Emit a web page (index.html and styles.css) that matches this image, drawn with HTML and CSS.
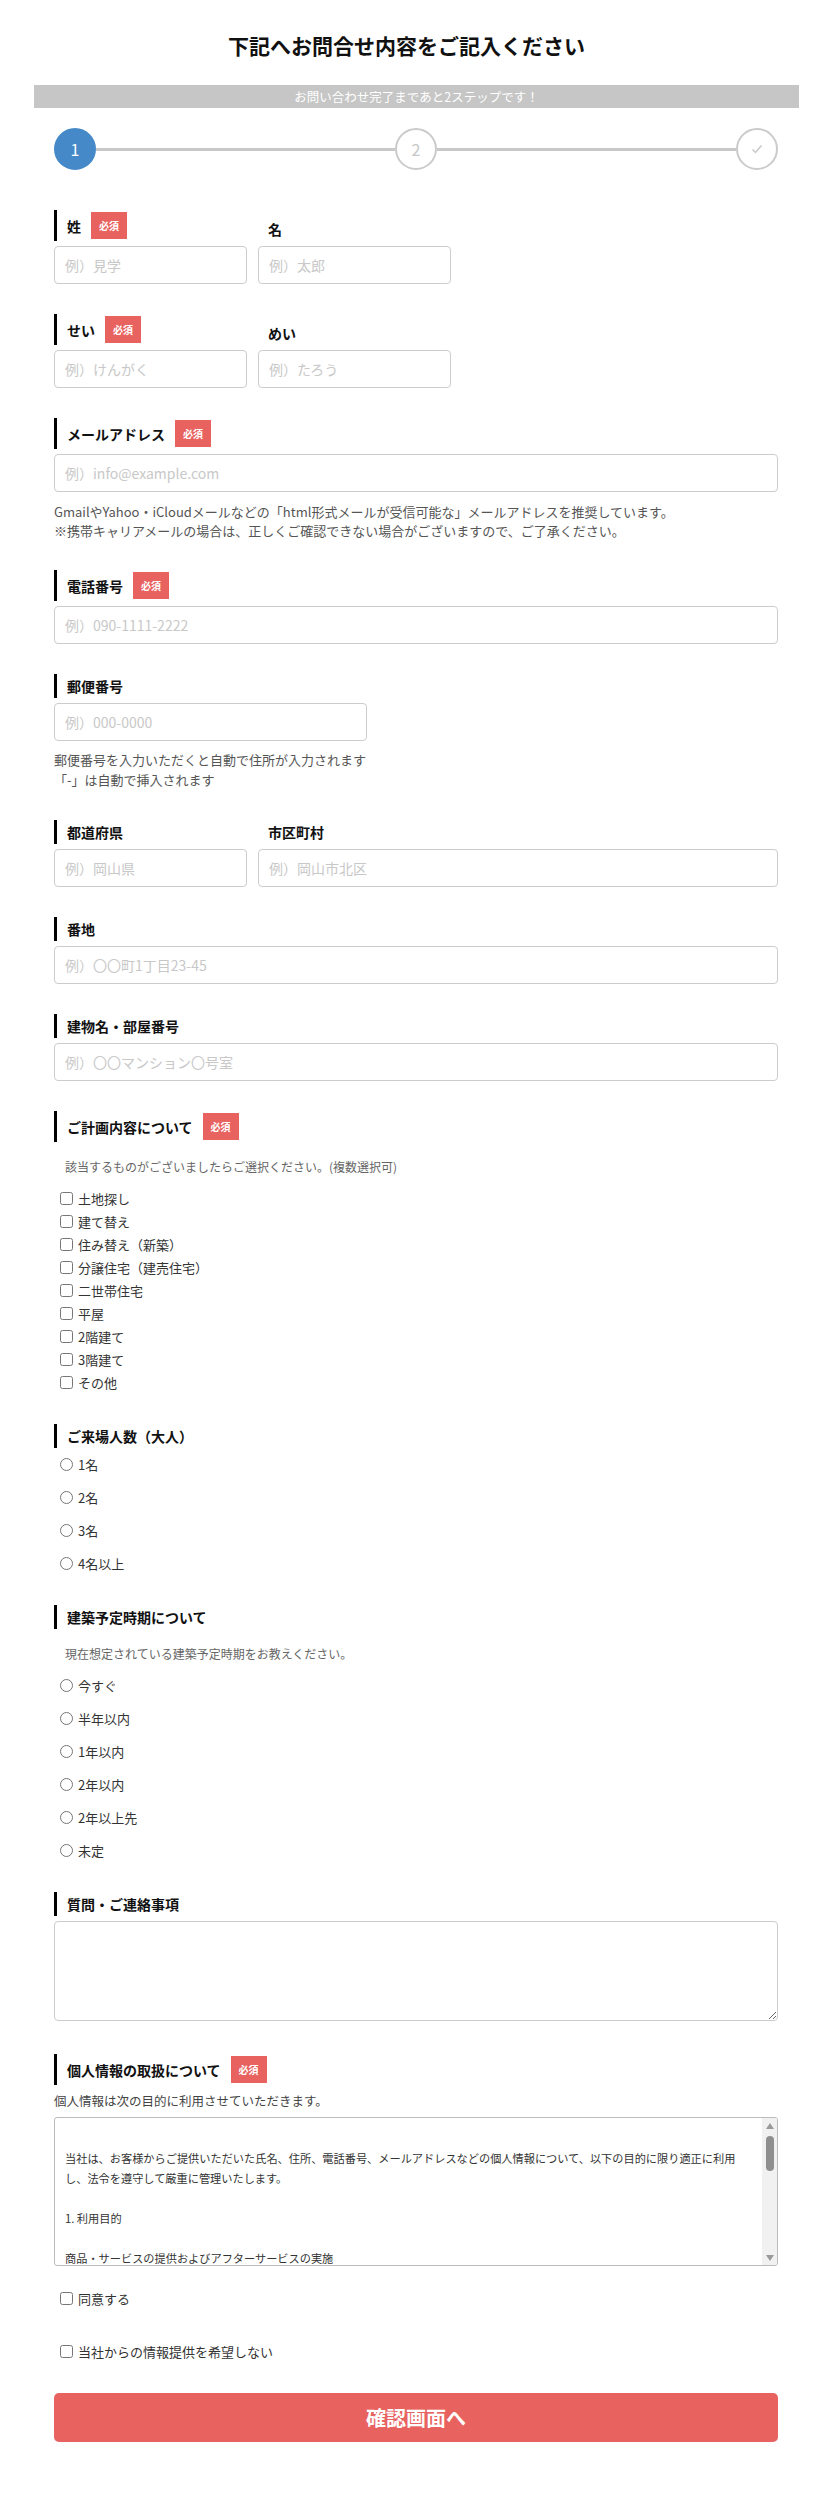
FILE: index.html
```html
<!DOCTYPE html>
<html lang="ja">
<head>
<meta charset="utf-8">
<title>お問合せ</title>
<link rel="stylesheet" href="styles.css">
</head>
<body>
<div class="page">
  <h1 class="title">下記へお問合せ内容をご記入ください</h1>
  <div class="notice">お問い合わせ完了まであと2ステップです！</div>
  <form class="form">
    <div class="steps">
      <span class="step step-active">1</span>
      <span class="step-line"></span>
      <span class="step">2</span>
      <span class="step-line"></span>
      <span class="step"><svg width="14" height="14" viewBox="0 0 14 14"><path d="M2.5 7.5 L5.5 10.5 L11.5 3.5" fill="none" stroke="#c8c8c8" stroke-width="1.5"/></svg></span>
    </div>

    <div class="field pair">
      <div class="col"><div class="label">姓<span class="req">必須</span></div><input class="input" placeholder="例）見学"></div>
      <div class="col"><div class="label sub">名</div><input class="input" placeholder="例）太郎"></div>
    </div>

    <div class="field pair">
      <div class="col"><div class="label">せい<span class="req">必須</span></div><input class="input" placeholder="例）けんがく"></div>
      <div class="col"><div class="label sub">めい</div><input class="input" placeholder="例）たろう"></div>
    </div>

    <div class="field">
      <div class="label">メールアドレス<span class="req">必須</span></div>
      <input class="input" placeholder="例）info@example.com">
      <p class="help">GmailやYahoo・iCloudメールなどの「html形式メールが受信可能な」メールアドレスを推奨しています。<br>※携帯キャリアメールの場合は、正しくご確認できない場合がございますので、ご了承ください。</p>
    </div>

    <div class="field">
      <div class="label">電話番号<span class="req">必須</span></div>
      <input class="input" placeholder="例）090-1111-2222">
    </div>

    <div class="field">
      <div class="label">郵便番号</div>
      <input class="input input-zip" placeholder="例）000-0000">
      <p class="help help-zip">郵便番号を入力いただくと自動で住所が入力されます<br>「-」は自動で挿入されます</p>
    </div>

    <div class="field pair pair-wide">
      <div class="col"><div class="label">都道府県</div><input class="input" placeholder="例）岡山県"></div>
      <div class="col"><div class="label sub">市区町村</div><input class="input" placeholder="例）岡山市北区"></div>
    </div>

    <div class="field">
      <div class="label">番地</div>
      <input class="input" placeholder="例）〇〇町1丁目23-45">
    </div>

    <div class="field">
      <div class="label">建物名・部屋番号</div>
      <input class="input" placeholder="例）〇〇マンション〇号室">
    </div>

    <div class="field">
      <div class="label">ご計画内容について<span class="req">必須</span></div>
      <p class="desc">該当するものがございましたらご選択ください。(複数選択可)</p>
      <div class="checks">
        <label class="opt"><input type="checkbox"><span>土地探し</span></label>
        <label class="opt"><input type="checkbox"><span>建て替え</span></label>
        <label class="opt"><input type="checkbox"><span>住み替え（新築）</span></label>
        <label class="opt"><input type="checkbox"><span>分譲住宅（建売住宅）</span></label>
        <label class="opt"><input type="checkbox"><span>二世帯住宅</span></label>
        <label class="opt"><input type="checkbox"><span>平屋</span></label>
        <label class="opt"><input type="checkbox"><span>2階建て</span></label>
        <label class="opt"><input type="checkbox"><span>3階建て</span></label>
        <label class="opt"><input type="checkbox"><span>その他</span></label>
      </div>
    </div>

    <div class="field">
      <div class="label">ご来場人数（大人）</div>
      <div class="radios">
        <label class="opt"><input type="radio" name="num"><span>1名</span></label>
        <label class="opt"><input type="radio" name="num"><span>2名</span></label>
        <label class="opt"><input type="radio" name="num"><span>3名</span></label>
        <label class="opt"><input type="radio" name="num"><span>4名以上</span></label>
      </div>
    </div>

    <div class="field">
      <div class="label">建築予定時期について</div>
      <p class="desc">現在想定されている建築予定時期をお教えください。</p>
      <div class="radios">
        <label class="opt"><input type="radio" name="time"><span>今すぐ</span></label>
        <label class="opt"><input type="radio" name="time"><span>半年以内</span></label>
        <label class="opt"><input type="radio" name="time"><span>1年以内</span></label>
        <label class="opt"><input type="radio" name="time"><span>2年以内</span></label>
        <label class="opt"><input type="radio" name="time"><span>2年以上先</span></label>
        <label class="opt"><input type="radio" name="time"><span>未定</span></label>
      </div>
    </div>

    <div class="field field-textarea">
      <div class="label">質問・ご連絡事項</div>
      <textarea class="textarea"></textarea>
    </div>

    <div class="field field-privacy">
      <div class="label">個人情報の取扱について<span class="req">必須</span></div>
      <p class="lead">個人情報は次の目的に利用させていただきます。</p>
      <div class="policy">
        <div class="policy-body">
          <p>当社は、お客様からご提供いただいた氏名、住所、電話番号、メールアドレスなどの個人情報について、以下の目的に限り適正に利用し、法令を遵守して厳重に管理いたします。</p>
          <p>1. 利用目的</p>
          <p>商品・サービスの提供およびアフターサービスの実施</p>
        </div>
        <div class="scrollbar" aria-hidden="true">
          <span class="sb-btn"><span class="sb-arrow sb-up"></span></span>
          <span class="sb-thumb"></span>
          <span class="sb-btn sb-btn-down"><span class="sb-arrow sb-down"></span></span>
        </div>
      </div>
      <div class="agree">
        <label class="opt"><input type="checkbox"><span>同意する</span></label>
        <label class="opt"><input type="checkbox"><span>当社からの情報提供を希望しない</span></label>
      </div>
    </div>

    <button type="button" class="submit">確認画面へ</button>
  </form>
</div>
</body>
</html>
```

FILE: styles.css
```css
* {
  box-sizing: border-box;
}

body {
  margin: 0;
  background: #fff;
  color: #333;
  font-family: "Noto Sans CJK JP", "Noto Sans", sans-serif;
}

.page {
  width: 829px;
  padding: 30px 30px 66px 34px;
}

.title {
  margin: 0;
  padding-right: 20px;
  font-size: 21px;
  line-height: 30px;
  font-weight: bold;
  color: #111;
  text-align: center;
}

.notice {
  margin-top: 25px;
  height: 23px;
  background: #c6c6c6;
  color: #fff;
  font-size: 12.5px;
  line-height: 23px;
  text-align: center;
}

.form {
  padding: 0 21px 0 20px;
}

.steps {
  display: flex;
  align-items: center;
  margin-top: 20px;
  margin-bottom: 40px;
}

.step {
  width: 42px;
  height: 42px;
  flex: none;
  border: 2px solid #cbcbcb;
  border-radius: 50%;
  background: #fff;
  color: #c8c8c8;
  font-size: 16px;
  display: flex;
  align-items: center;
  justify-content: center;
}

.step-active {
  background: #4589c8;
  border-color: #4589c8;
  color: #fff;
}

.step-line {
  flex: 1;
  height: 3px;
  background: #c8c8c8;
}

.field {
  margin-bottom: 30px;
}

.label {
  display: flex;
  align-items: center;
  border-left: 3px solid #000;
  padding: 2px 0 2px 10px;
  min-height: 24px;
  font-size: 14px;
  line-height: 20px;
  font-weight: bold;
  color: #111;
}

.label.sub {
  border-left: 0;
  padding-left: 10px;
}

.req {
  display: inline-flex;
  align-items: center;
  justify-content: center;
  width: 36px;
  height: 27px;
  margin-left: 10px;
  background: #e8625f;
  color: #fff;
  font-size: 10px;
  font-weight: bold;
}

.input {
  display: block;
  width: 100%;
  height: 38px;
  margin-top: 5px;
  padding: 0 10px;
  border: 1px solid #cccccc;
  border-radius: 4px;
  font-family: inherit;
  font-size: 14px;
  color: #333;
  background: #fff;
}

.input::placeholder {
  color: #c8c8c8;
}

.input-zip {
  width: 313px;
}

.pair {
  display: grid;
  grid-template-columns: 193px 193px;
  column-gap: 11px;
  align-items: end;
}

.pair-wide {
  grid-template-columns: 193px 1fr;
}

.help {
  margin: 10px 0 0;
  font-size: 13px;
  line-height: 19px;
  color: #555;
}

.help-zip {
  margin-top: 9px;
  line-height: 20px;
}

.desc {
  margin: 15px 0 0 11px;
  font-size: 12px;
  line-height: 20px;
  color: #666;
}

.checks {
  margin-top: 10px;
  display: flex;
  flex-direction: column;
}

.radios {
  margin-top: 5px;
  display: flex;
  flex-direction: column;
  gap: 10px;
}

.desc + .radios {
  margin-top: 10px;
}

.opt {
  display: flex;
  align-items: center;
  height: 23px;
  padding-left: 6px;
  font-size: 13px;
  line-height: 23px;
  color: #333;
}

.opt input {
  width: 13px;
  height: 13px;
  margin: 0 5px 0 0;
  flex: none;
}

.field-textarea {
  margin-bottom: 33px;
}

.textarea {
  display: block;
  width: 100%;
  height: 100px;
  margin-top: 5px;
  border: 1px solid #cccccc;
  border-radius: 4px;
  font-family: inherit;
  font-size: 14px;
  resize: vertical;
}

.lead {
  margin: 6px 0 0;
  font-size: 12.5px;
  line-height: 20px;
  color: #444;
}

.policy {
  display: flex;
  margin-top: 6px;
  height: 149px;
  border: 1px solid #bbbbbb;
  border-radius: 3px;
  overflow: hidden;
}

.policy-body {
  flex: 1;
  min-width: 0;
  padding: 30px 10px 0;
  font-size: 11.2px;
  line-height: 20px;
  color: #333;
}

.policy-body p {
  margin: 0 0 20px;
}

.policy-body p:last-child {
  margin-bottom: 0;
}

.scrollbar {
  width: 15px;
  flex: none;
  display: flex;
  flex-direction: column;
  background: #f1f1f1;
}

.sb-btn {
  height: 15px;
  flex: none;
  display: flex;
  align-items: center;
  justify-content: center;
}

.sb-btn-down {
  margin-top: auto;
}

.sb-arrow {
  width: 0;
  height: 0;
  border-left: 4px solid transparent;
  border-right: 4px solid transparent;
}

.sb-up {
  border-bottom: 6px solid #9a9a9a;
}

.sb-down {
  border-top: 6px solid #9a9a9a;
}

.sb-thumb {
  height: 35px;
  margin: 3px 3.5px 0;
  border-radius: 4px;
  background: #8f8f8f;
}

.agree {
  margin-top: 21px;
  display: flex;
  flex-direction: column;
  gap: 30px;
}

.submit {
  display: block;
  width: 100%;
  height: 49px;
  border: 0;
  border-radius: 5px;
  background: #e8625f;
  color: #fff;
  font-family: inherit;
  font-size: 20px;
  font-weight: bold;
}
```
